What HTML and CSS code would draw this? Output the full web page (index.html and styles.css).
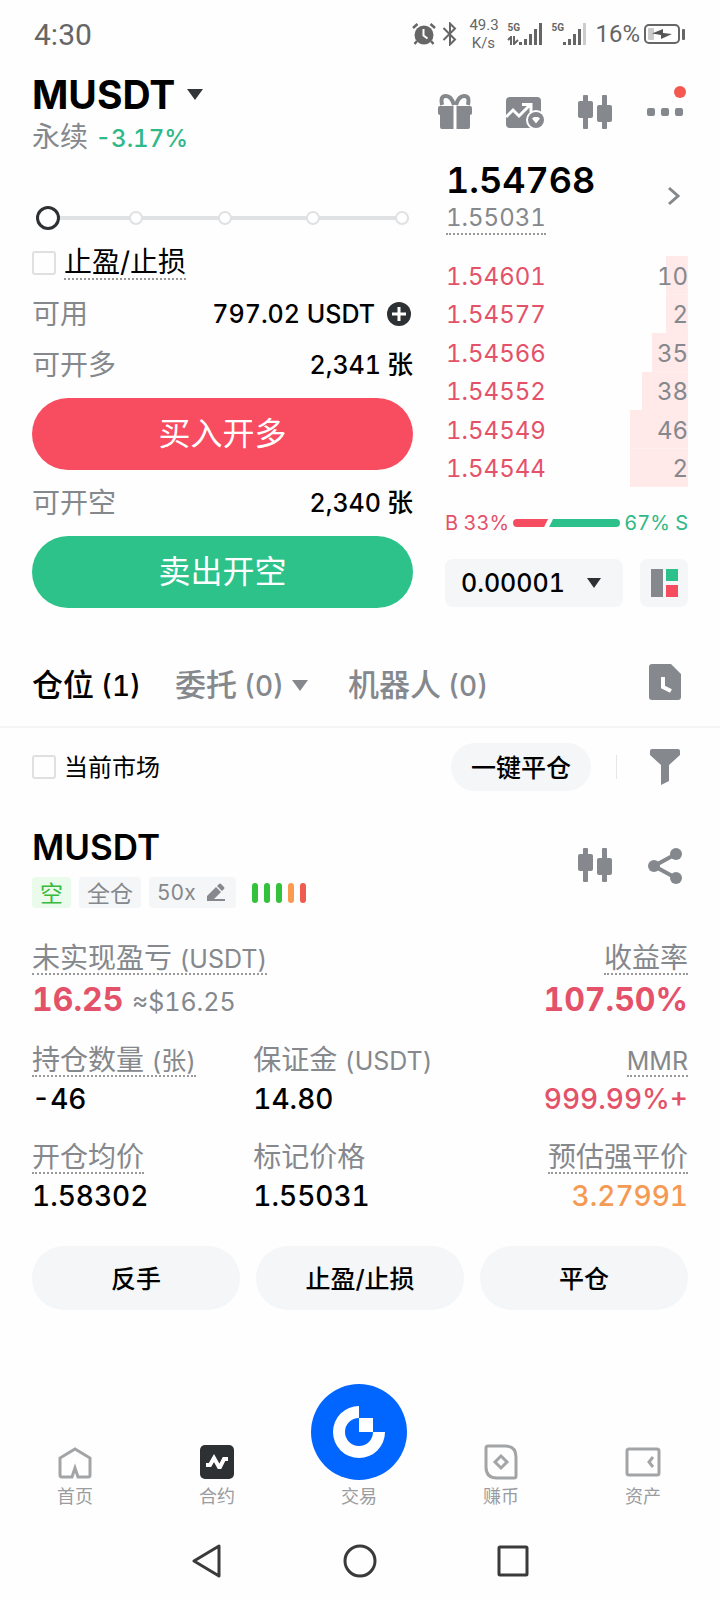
FILE: index.html
```html
<!DOCTYPE html>
<html lang="zh-CN">
<head>
    <meta charset="UTF-8">
    <meta name="viewport" content="width=device-width, initial-scale=1.0">
    <title>MUSDT 永续</title>
    <link rel="stylesheet" href="styles.css">
</head>
<body>
    <!-- shared icons -->
    <svg class="defs" width="0" height="0" aria-hidden="true">
        <symbol id="candles" viewBox="0 0 36 36">
            <rect x="6" y="1" width="5" height="34" rx="1"/>
            <rect x="1" y="7" width="15" height="17" rx="2"/>
            <rect x="25" y="1" width="5" height="34" rx="1"/>
            <rect x="20" y="11" width="15" height="17" rx="2"/>
        </symbol>
    </svg>

    <div class="status-bar">
        <span class="clock">4:30</span>
        <div class="status-icons">
            <svg width="24" height="24" viewBox="0 0 24 24" fill="#666">
                <circle cx="12" cy="13" r="9.5"/>
                <path d="M1 6 5.500 2M23 6 18.500 2M5 19l-2.500 3M19 19l2.500 3" stroke="#666" stroke-width="2.500" fill="none"/>
                <path d="M11.500 7v6.500l4 3" stroke="#fff" stroke-width="2" fill="none"/>
            </svg>
            <svg class="bluetooth" width="16" height="24" viewBox="0 0 16 24" fill="none" stroke="#666" stroke-width="2">
                <path d="M1.500 6 13 17.500 8 22.500V1.500L13 6.500 1.500 18"/>
            </svg>
            <div class="speed">49.3<br>K/s</div>
            <div class="signal">
                <div class="net"><b>5G</b>
                    <svg width="12" height="9" viewBox="0 0 12 9" fill="none" stroke="#666" stroke-width="2"><path d="M1 4l3-3v8M7 0v8l4-4"/></svg>
                </div>
                <svg width="24" height="24" viewBox="0 0 24 24" fill="#666">
                    <rect x="0" y="20" width="3" height="3"/><rect x="5" y="17" width="3" height="6"/><rect x="10" y="12" width="3" height="11"/><rect x="15" y="7" width="3" height="16"/><rect x="20" y="1" width="3" height="22"/>
                </svg>
            </div>
            <div class="signal">
                <div class="net"><b>5G</b></div>
                <svg width="24" height="24" viewBox="0 0 24 24" fill="#666">
                    <rect x="0" y="20" width="3" height="3"/><rect x="5" y="17" width="3" height="6"/><rect x="10" y="12" width="3" height="11"/><rect x="15" y="7" width="3" height="16"/><rect x="20" y="1" width="3" height="22" fill="#ccc"/>
                </svg>
            </div>
            <span class="percent">16%</span>
            <svg width="42" height="22" viewBox="0 0 42 22">
                <rect x="1" y="2" width="34" height="18" rx="4" fill="none" stroke="#666" stroke-width="2"/>
                <rect x="4" y="5" width="6" height="12" rx="1" fill="#ccc"/>
                <path d="M8 10.500 19 6v4l9 1-11 5v-4z" fill="#555"/>
                <rect x="38" y="6" width="3" height="11" rx="1" fill="#666"/>
            </svg>
        </div>
    </div>

    <header class="header">
        <div class="symbol">
            <h1>MUSDT <svg width="18" height="12" viewBox="0 0 18 12"><path d="M1 0h16L9 11z" fill="#333639"/></svg></h1>
            <p class="sub">永续 <span class="change">-3.17%</span></p>
        </div>
        <div class="icons">
            <button class="icon-btn" aria-label="福利">
                <svg width="36" height="36" viewBox="0 0 36 36">
                    <path d="M17 11C15 4 12 2 9 2 4 2 4 6 5 11M19 11c2-7 5-9 8-9 5 0 5 4 4 9" fill="none" stroke="#85888c" stroke-width="4"/>
                    <rect x="1" y="12" width="34" height="9" rx="2"/>
                    <path d="M3 19h30v14a2 2 0 0 1-2 2H5a2 2 0 0 1-2-2z"/>
                    <path d="M18 12v23" stroke="#fff" stroke-width="3"/>
                </svg>
            </button>
            <button class="icon-btn" aria-label="行情">
                <svg width="40" height="36" viewBox="0 0 40 36">
                    <rect x="1" y="3" width="35" height="31" rx="4"/>
                    <path d="M1 23 8 16l6 6L25 11M17 10.500h9v8" fill="none" stroke="#fff" stroke-width="3"/>
                    <circle cx="31" cy="26" r="10" fill="#fff"/>
                    <circle cx="31" cy="26" r="8"/>
                    <path d="M27 24.500l2-1.500h4l2 1.500-4 5z" fill="#fff"/>
                </svg>
            </button>
            <button class="icon-btn" aria-label="K线"><svg width="36" height="36"><use href="#candles"/></svg></button>
            <button class="icon-btn more" aria-label="更多">
                <svg width="38" height="36" viewBox="0 0 38 36">
                    <rect x="1" y="14" width="8" height="8" rx="2"/><rect x="15" y="14" width="8" height="8" rx="2"/><rect x="29" y="14" width="8" height="8" rx="2"/>
                </svg>
                <span class="dot"></span>
            </button>
        </div>
    </header>

    <main>
        <section class="trade">
            <form class="order">
                <div class="slider">
                    <div class="ticks"><i></i><i></i><i></i><i></i><i></i></div>
                    <input type="range" min="0" max="100" value="0" aria-label="仓位比例">
                </div>
                <label class="check"><input type="checkbox"><span class="dotted">止盈/止损</span></label>
                <div class="row">
                    <span class="name">可用</span>
                    <span class="num">797.02 USDT
                        <svg width="24" height="24" viewBox="0 0 24 24"><circle cx="12" cy="12" r="12" fill="#2e3134"/><path d="M12 5v14M5 12h14" stroke="#fff" stroke-width="3"/></svg>
                    </span>
                </div>
                <div class="row"><span class="name">可开多</span><span class="num">2,341<em>张</em></span></div>
                <button type="button" class="buy">买入开多</button>
                <div class="row"><span class="name">可开空</span><span class="num">2,340<em>张</em></span></div>
                <button type="button" class="sell">卖出开空</button>
            </form>

            <div class="book">
                <div class="price">
                    <div>
                        <div class="last">1.54768</div>
                        <div class="mark dotted">1.55031</div>
                    </div>
                    <svg width="16" height="20" viewBox="0 0 16 20"><path d="M2 2l9 8-9 8" fill="none" stroke="#85888c" stroke-width="3"/></svg>
                </div>
                <table class="asks">
                    <tr style="--depth: 9%"><td>1.54601</td><td>10</td></tr>
                    <tr style="--depth: 9%"><td>1.54577</td><td>2</td></tr>
                    <tr style="--depth: 15%"><td>1.54566</td><td>35</td></tr>
                    <tr style="--depth: 19%"><td>1.54552</td><td>38</td></tr>
                    <tr style="--depth: 24%"><td>1.54549</td><td>46</td></tr>
                    <tr style="--depth: 24%"><td>1.54544</td><td>2</td></tr>
                </table>
                <div class="ratio">
                    <span class="red">B 33%</span>
                    <div class="ratio-bar"><i class="b" style="flex-grow: 33"></i><i class="s" style="flex-grow: 67"></i></div>
                    <span class="green">67% S</span>
                </div>
                <div class="book-tools">
                    <div class="precision">
                        <select aria-label="精度"><option>0.00001</option></select>
                        <svg width="14" height="10" viewBox="0 0 14 10"><path d="M0 0h14L7 10z" fill="#2e3134"/></svg>
                    </div>
                    <button class="layout" aria-label="盘口布局">
                        <svg width="28" height="28" viewBox="0 0 28 28"><path fill="#85888c" d="M1 0h12v28H1z"/><path fill="#2cc08a" d="M16 0h12v12H16z"/><path fill="#f64c60" d="M16 16h12v12H16z"/></svg>
                    </button>
                </div>
            </div>
        </section>

        <nav class="tabs">
            <a href="#" class="active">仓位<span>(1)</span></a>
            <a href="#">委托<span>(0)</span><svg width="16" height="11" viewBox="0 0 16 11"><path d="M0 0h16L8 11z"/></svg></a>
            <a href="#">机器人<span>(0)</span></a>
            <button class="icon-btn" aria-label="历史记录">
                <svg width="34" height="38" viewBox="0 0 34 38"><path d="M4 1h19l10 10v23a3 3 0 0 1-3 3H4a3 3 0 0 1-3-3V4a3 3 0 0 1 3-3z"/><path d="M15 14v10l8 4" fill="none" stroke="#fff" stroke-width="4"/></svg>
            </button>
        </nav>

        <div class="filter">
            <label class="check"><input type="checkbox"><span>当前市场</span></label>
            <button class="pill">一键平仓</button>
            <span class="sep"></span>
            <button class="icon-btn" aria-label="筛选">
                <svg width="32" height="38" viewBox="0 0 32 38"><path d="M3 1h26a2 2 0 0 1 2 2v4L20 17v16l-8 4V17L1 7V3a2 2 0 0 1 2-2z"/></svg>
            </button>
        </div>

        <section class="position">
            <div class="pos-head">
                <div>
                    <h2>MUSDT</h2>
                    <div class="tags">
                        <span class="tag short">空</span>
                        <span class="tag">全仓</span>
                        <button class="tag">50x
                            <svg width="20" height="20" viewBox="0 0 20 20"><path d="M1 18v-5l9-9 5 5-7 7h11v2zM11 3l2-2q1-1 2 0l3 3q1 1 0 2l-2 2z"/></svg>
                        </button>
                        <div class="risk"><i></i><i></i><i></i><i class="mid"></i><i class="high"></i></div>
                    </div>
                </div>
                <div class="icons">
                    <button class="icon-btn" aria-label="K线"><svg width="36" height="36"><use href="#candles"/></svg></button>
                    <button class="icon-btn" aria-label="分享">
                        <svg width="36" height="38" viewBox="0 0 36 38"><path d="M29 7 7 19l22 12" fill="none" stroke="#85888c" stroke-width="4"/><circle cx="29" cy="7" r="6"/><circle cx="7" cy="19" r="6"/><circle cx="29" cy="31" r="6"/></svg>
                    </button>
                </div>
            </div>

            <dl class="metrics summary">
                <div><dt><span class="dotted">未实现盈亏 <small>(USDT)</small></span></dt><dd class="red">16.25 <small>≈$16.25</small></dd></div>
                <div><dt><span class="dotted">收益率</span></dt><dd class="red">107.50%</dd></div>
            </dl>
            <dl class="metrics">
                <div><dt><span class="dotted">持仓数量 <small>(张)</small></span></dt><dd>-46</dd></div>
                <div><dt><span>保证金 <small>(USDT)</small></span></dt><dd>14.80</dd></div>
                <div><dt><span class="dotted"><small>MMR</small></span></dt><dd class="red">999.99%+</dd></div>
                <div><dt><span class="dotted">开仓均价</span></dt><dd>1.58302</dd></div>
                <div><dt><span>标记价格</span></dt><dd>1.55031</dd></div>
                <div><dt><span class="dotted">预估强平价</span></dt><dd class="orange">3.27991</dd></div>
            </dl>

            <div class="actions">
                <button class="pill">反手</button>
                <button class="pill">止盈/止损</button>
                <button class="pill">平仓</button>
            </div>
        </section>
    </main>

    <nav class="tab-bar">
        <a href="#">
            <svg width="36" height="36" viewBox="0 0 36 36"><path d="M15 33H5a2 2 0 0 1-2-2V14L18 5l15 9v17a2 2 0 0 1-2 2H21l-3-9z"/></svg>
            首页
        </a>
        <a href="#">
            <svg width="36" height="36" viewBox="0 0 36 36"><rect x="1" y="1" width="34" height="34" rx="5" fill="#2e3134" stroke="none"/><path d="M7 21h4l4-7 5 9h1l4-8h4" fill="none" stroke="#fff" stroke-width="4"/></svg>
            合约
        </a>
        <a href="#" class="center">
            <svg width="96" height="96" viewBox="0 0 96 96">
                <circle cx="48" cy="48" r="48" fill="#06f" stroke="none"/>
                <path d="M48 22a26 26 0 1 0 26 26H62a14 14 0 1 1-14-14z" fill="#fff" stroke="none"/>
                <path d="M48 34h14v14H48z" fill="#fff" stroke="none"/>
            </svg>
            交易
        </a>
        <a href="#">
            <svg width="36" height="36" viewBox="0 0 36 36"><path d="M5 2h17q11 0 11 11v19a2 2 0 0 1-2 2H14Q3 34 3 23V4a2 2 0 0 1 2-2zM18 12l6 6-6 6-6-6z"/></svg>
            赚币
        </a>
        <a href="#">
            <svg width="36" height="36" viewBox="0 0 36 36"><rect x="2" y="5" width="32" height="26" rx="2"/><path d="M28 13l-4 5 4 5"/></svg>
            资产
        </a>
    </nav>

    <div class="system-nav">
        <button aria-label="返回"><svg width="32" height="34" viewBox="0 0 32 34"><path d="M28 2v30L3 17z" fill="none" stroke="#3a3a3c" stroke-width="3" stroke-linejoin="round"/></svg></button>
        <button aria-label="主页"><svg width="34" height="34" viewBox="0 0 34 34"><circle cx="17" cy="17" r="15" fill="none" stroke="#3a3a3c" stroke-width="3"/></svg></button>
        <button aria-label="最近任务"><svg width="32" height="32" viewBox="0 0 32 32"><rect x="2" y="2" width="28" height="28" rx="1" fill="none" stroke="#3a3a3c" stroke-width="3"/></svg></button>
    </div>
</body>
</html>
```
FILE: styles.css
```css
* {
    box-sizing: border-box;
}

body {
    margin: 0;
    min-height: 100vh;
    display: flex;
    flex-direction: column;
    background-color: #fefefe;
    color: #000;
    font-family: Inter, "Noto Sans CJK SC", sans-serif;
    font-variant-numeric: tabular-nums;
}

h1, h2, p, dl, dd {
    margin: 0;
}

button, input, select {
    font: inherit;
    color: inherit;
    margin: 0;
}

button {
    padding: 0;
    border: none;
    background: none;
    cursor: pointer;
}

a {
    color: inherit;
    text-decoration: none;
}

svg {
    flex: none;
}

.defs {
    position: absolute;
}

.red {
    color: #e4526a;
}

.green {
    color: #2fb888;
}

.orange {
    color: #f59a52;
}

.dotted {
    border-bottom: 2px dotted #999;
}

/* status bar */
.status-bar {
    display: flex;
    justify-content: space-between;
    align-items: center;
    height: 68px;
    padding: 0 34px;
    color: #666;
    font-family: Roboto, sans-serif;
}

.clock {
    font-size: 30px;
}

.status-icons {
    display: flex;
    align-items: center;
}

.bluetooth {
    margin: 0 11px 0 6px;
}

.speed {
    width: 28px;
    margin-right: 10px;
    font-size: 15px;
    line-height: 18px;
    text-align: center;
}

.signal {
    display: flex;
    margin-right: 8px;
}

.net {
    display: flex;
    flex-direction: column;
    justify-content: space-between;
    width: 12px;
    height: 23px;
}

.net b {
    font-size: 10px;
    line-height: 12px;
}

.percent {
    margin-right: 4px;
    font-size: 24px;
}

/* header */
.header {
    display: flex;
    justify-content: space-between;
    align-items: center;
    height: 88px;
    padding: 0 32px;
}

.symbol {
    padding-top: 6px;
}

h1 {
    font-size: 39px;
    line-height: 44px;
}

h1 svg {
    margin-bottom: 8px;
}

.sub {
    margin-top: 2px;
    font-size: 28px;
    line-height: 36px;
    color: #85888c;
}

.change {
    font-size: 24px;
    font-weight: 500;
    color: #2fb888;
}

.icons {
    display: flex;
    gap: 24px;
}

.icon-btn {
    position: relative;
    display: flex;
    justify-content: center;
    width: 46px;
    fill: #85888c;
}

.dot {
    position: absolute;
    top: -8px;
    right: 2px;
    width: 12px;
    height: 12px;
    border-radius: 50%;
    background-color: #f4584e;
}

/* order form + order book */
.trade {
    display: grid;
    grid-template-columns: 381fr 243fr;
    gap: 32px;
    padding: 0 32px;
}

.order {
    display: flex;
    flex-direction: column;
    gap: 15px;
    padding-top: 50px;
}

.slider {
    display: grid;
    margin: 0 4px;
}

.slider > * {
    grid-area: 1 / 1;
}

.slider input {
    appearance: none;
    width: 100%;
    height: 24px;
    background: none;
}

.slider input::-webkit-slider-thumb {
    appearance: none;
    width: 24px;
    height: 24px;
    border: 3px solid #2e3134;
    border-radius: 50%;
    background-color: #fff;
}

.ticks {
    display: flex;
    justify-content: space-between;
    align-items: center;
    margin-left: 4px;
    background: linear-gradient(#dfe1e2, #dfe1e2) center / 100% 4px no-repeat;
}

.ticks i {
    width: 14px;
    height: 14px;
    border: 2px solid #dfe1e2;
    border-radius: 50%;
    background-color: #fff;
}

.check {
    display: flex;
    align-items: center;
    gap: 8px;
}

.check input {
    appearance: none;
    width: 24px;
    height: 24px;
    border: 2px solid #e0e0e0;
    border-radius: 3px;
}

.order .check {
    height: 36px;
    font-size: 28px;
    line-height: 32px;
}

.row {
    display: flex;
    justify-content: space-between;
    align-items: center;
    height: 36px;
}

.name {
    font-size: 28px;
    line-height: 36px;
    color: #85888c;
}

.num {
    display: flex;
    align-items: center;
    gap: 12px;
    font-size: 25px;
    font-weight: 500;
    line-height: 36px;
}

.num svg {
    margin-right: 2px;
}

.num em {
    margin-left: -6px;
    font-size: 26px;
    font-style: normal;
}

.buy, .sell {
    height: 72px;
    padding-bottom: 6px;
    border-radius: 36px;
    font-size: 32px;
    color: #fff;
}

.buy {
    background-color: #f84c60;
}

.sell {
    background-color: #2cc289;
}

.price {
    display: flex;
    justify-content: space-between;
    align-items: center;
    height: 100px;
    padding: 0 5px 20px 1px;
}

.last {
    font-size: 36px;
    font-weight: 600;
    line-height: 46px;
}

.mark {
    display: inline-block;
    font-size: 24px;
    line-height: 30px;
    color: #85888c;
}

.asks {
    width: 100%;
    height: 231px;
    border-collapse: collapse;
    font-size: 24px;
    color: #e4526a;
}

.asks tr {
    background: linear-gradient(#ffe9e9, #ffe9e9) right / var(--depth) 100% no-repeat;
}

.asks td {
    padding: 2px 0 0 1px;
}

.asks td:last-child {
    text-align: right;
    color: #85888c;
}

.ratio {
    display: flex;
    align-items: center;
    gap: 4px;
    height: 72px;
    font-size: 20px;
}

.ratio-bar {
    flex: 1;
    display: flex;
    height: 8px;
}

.ratio-bar i {
    flex-basis: 0;
}

.ratio-bar .b {
    border-radius: 4px 0 0 4px;
    background-color: #f64c60;
    clip-path: polygon(0 0, 100% 0, calc(100% - 4px) 100%, 0 100%);
}

.ratio-bar .s {
    margin-left: 1px;
    border-radius: 0 4px 4px 0;
    background-color: #2cc08a;
    clip-path: polygon(4px 0, 100% 0, 100% 100%, 0 100%);
}

.book-tools {
    display: flex;
    gap: 17px;
}

.precision {
    position: relative;
    flex: 1;
}

.precision select {
    appearance: none;
    width: 100%;
    height: 48px;
    padding: 0 16px;
    border: none;
    border-radius: 8px;
    background-color: #f4f6f7;
    font-size: 25px;
    font-weight: 500;
}

.precision svg {
    position: absolute;
    top: 19px;
    right: 22px;
    pointer-events: none;
}

.layout {
    display: flex;
    justify-content: center;
    align-items: center;
    width: 48px;
    height: 48px;
    border-radius: 8px;
    background-color: #f4f6f7;
}

/* tabs */
.tabs {
    display: flex;
    align-items: center;
    gap: 34px;
    height: 90px;
    margin-top: 30px;
    padding: 0 32px;
    border-bottom: 2px solid #f4f4f4;
    font-size: 31px;
    font-weight: 500;
    color: #85888c;
    fill: #85888c;
}

.tabs span {
    margin-left: 7px;
    font-size: 28px;
}

.tabs a svg {
    margin: 0 6px 0 8px;
    vertical-align: 5px;
}

.tabs .active {
    color: #000;
}

.tabs .icon-btn {
    margin-left: auto;
}

/* filter row */
.filter {
    display: flex;
    align-items: center;
    gap: 25px;
    padding: 15px 32px 0;
    font-size: 24px;
}

.filter .check {
    margin-right: auto;
}

.filter .check span {
    padding-bottom: 3px;
}

.pill {
    height: 48px;
    padding: 0 20px 3px;
    border-radius: 32px;
    background-color: #f4f6f7;
    font-size: 25px;
    font-weight: 500;
}

.sep {
    width: 1px;
    height: 24px;
    background-color: #e6e6e6;
}

/* position card */
.position {
    padding: 36px 32px;
}

.pos-head {
    display: flex;
    justify-content: space-between;
    align-items: center;
}

.pos-head .icons {
    padding-bottom: 4px;
}

h2 {
    font-size: 35px;
    font-weight: 600;
    line-height: 40px;
}

.tags {
    display: flex;
    align-items: center;
    gap: 8px;
    margin-top: 10px;
}

.tag {
    display: flex;
    align-items: center;
    gap: 12px;
    height: 31px;
    padding: 0 8px 2px;
    border-radius: 4px;
    background-color: #f4f6f7;
    font-size: 23px;
    color: #85888c;
    fill: #85888c;
}

button.tag {
    gap: 10px;
    padding: 0 10px 0 8px;
    font-size: 21px;
}

.short {
    background-color: #eafaeb;
    color: #37bb3f;
}

.risk {
    display: flex;
    gap: 6px;
    margin-left: 8px;
}

.risk i {
    width: 6px;
    height: 20px;
    border-radius: 3px;
    background-color: #34c13c;
}

.risk .mid {
    background-color: #f99a4f;
}

.risk .high {
    background-color: #ef5b4f;
}

.metrics {
    display: grid;
    grid-template-columns: repeat(3, 1fr);
    gap: 25px 8px;
    margin-top: 22px;
}

.summary {
    grid-template-columns: auto auto;
    margin-top: 35px;
}

.metrics > :last-child, .metrics > :nth-child(3n) {
    text-align: right;
}

dt {
    height: 32px;
    font-size: 28px;
    line-height: 30px;
    color: #85888c;
    white-space: nowrap;
}

dt span {
    display: inline-block;
    height: 32px;
}

dt small {
    font-size: 25px;
}

dd {
    margin-top: 4px;
    font-size: 28px;
    font-weight: 500;
    line-height: 36px;
}

.summary dd {
    font-size: 32px;
    font-weight: 700;
    line-height: 42px;
}

.summary small {
    font-size: 25px;
    font-weight: 400;
    color: #85888c;
}

.actions {
    display: grid;
    grid-template-columns: repeat(3, 1fr);
    gap: 16px;
    margin-top: 32px;
}

.actions .pill {
    height: 64px;
}

/* bottom navigation */
.tab-bar {
    display: grid;
    grid-template-columns: repeat(5, 1fr);
    align-items: end;
    margin-top: auto;
    padding: 0 6px 12px 4px;
    font-size: 18px;
    line-height: 26px;
    color: #9a9c9f;
}

.tab-bar a {
    display: flex;
    flex-direction: column;
    align-items: center;
    gap: 4px;
}

.tab-bar svg {
    fill: none;
    stroke: #a2a4a6;
    stroke-width: 3;
}

.system-nav {
    display: flex;
    justify-content: center;
    align-items: center;
    gap: 120px;
    height: 78px;
}

.system-nav button {
    display: flex;
}
```
